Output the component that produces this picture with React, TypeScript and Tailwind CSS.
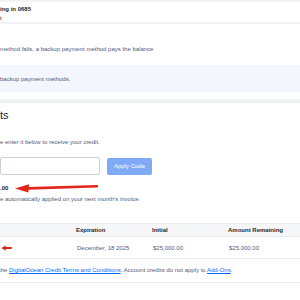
import { ReactNode } from 'react';

function Arrow({ className }: { className?: string }) {
  return (
    <svg viewBox="0 0 84 10" className={className}>
      <path d="M83 3.2 L14 5.4" stroke="#e3261c" strokeWidth="2.6" strokeLinecap="round" />
      <path d="M1 5.6 L15 1.2 L14.4 9.4 Z" fill="#e3261c" />
    </svg>
  );
}

function SmallArrow({ className }: { className?: string }) {
  return (
    <svg viewBox="0 0 14 8" className={className}>
      <path d="M13 4 L4 4" stroke="#e3261c" strokeWidth="2.4" strokeLinecap="round" />
      <path d="M0 4 L6 0.5 L6 7.5 Z" fill="#e3261c" />
    </svg>
  );
}

function Cell({ children, className }: { children: ReactNode; className?: string }) {
  return <div className={className}>{children}</div>;
}

export default function App() {
  return (
    <div
      className="w-[300px] h-[300px] overflow-hidden bg-[#f2f3f5] text-[#4d5b7c] text-[6px] leading-none"
      style={{ fontFamily: '"Liberation Sans", Arial, sans-serif' }}
    >
      {/* Payment method card */}
      <div className="mt-[2px] h-[20px] bg-white pt-[4px]">
        <div className="font-bold text-[#24292e]">ing in 0685</div>
        <div className="mt-[3px] text-[#24292e]">t</div>
      </div>

      {/* Backup payment */}
      <div className="mt-[2px] h-[75px] bg-white">
        <div className="pt-[22px] h-[41px]">method fails, a backup payment method pays the balance</div>
        <div className="h-[27px] bg-[#f3f6fc] pt-[11px]">backup payment methods.</div>
      </div>

      {/* Credits */}
      <div className="mt-[3px] bg-white border-t border-[#ebedf0]">
        <div className="pt-[7px] text-[11px] text-[#24292e] leading-none">ts</div>
        <div className="mt-[18px]">e enter it below to receive your credit.</div>
        <div className="mt-[12px] flex items-center gap-[7px]">
          <div className="w-[100px] h-[18px] bg-white border border-[#c9cfd9] rounded-[2px]" />
          <button className="w-[45px] h-[17px] bg-[#80aaf5] rounded-[2px] text-white text-[6px]">
            Apply Code
          </button>
        </div>
        <div className="mt-[9px] flex items-center h-[8px]">
          <span className="font-bold text-[#24292e]">.00</span>
          <Arrow className="ml-[6px] w-[84px] h-[10px]" />
        </div>
        <div className="mt-[4px]">e automatically applied on your next month's invoice.</div>

        <div className="mt-[21px] border-t border-b border-[#e6e9ee]">
          <div className="h-[13px] bg-[#f5f6f8] flex items-center font-bold text-[#24292e] border-b border-[#e6e9ee]">
            <Cell className="w-[76px]" />
            <Cell className="w-[76px]">Expiration</Cell>
            <Cell className="w-[76px]">Initial</Cell>
            <Cell>Amount Remaining</Cell>
          </div>
          <div className="h-[21px] flex items-center text-[#4d5b7c]">
            <Cell className="w-[77px]">
              <SmallArrow className="w-[13px] h-[6px]" />
            </Cell>
            <Cell className="w-[76px]">December, 18 2025</Cell>
            <Cell className="w-[76px]">$25,000.00</Cell>
            <Cell>$25,000.00</Cell>
          </div>
        </div>

        <div className="h-[24px] pt-[8px] border-b border-[#e6e9ee]">
          <span className="-ml-[1px]">the </span>
          <a className="text-[#0069ff] underline">DigitalOcean Credit Terms and Conditions</a>
          <span>. Account credits do not apply to </span>
          <a className="text-[#0069ff] underline">Add-Ons</a>
          <span>.</span>
        </div>
        <div className="h-[30px]" />
      </div>
    </div>
  );
}
